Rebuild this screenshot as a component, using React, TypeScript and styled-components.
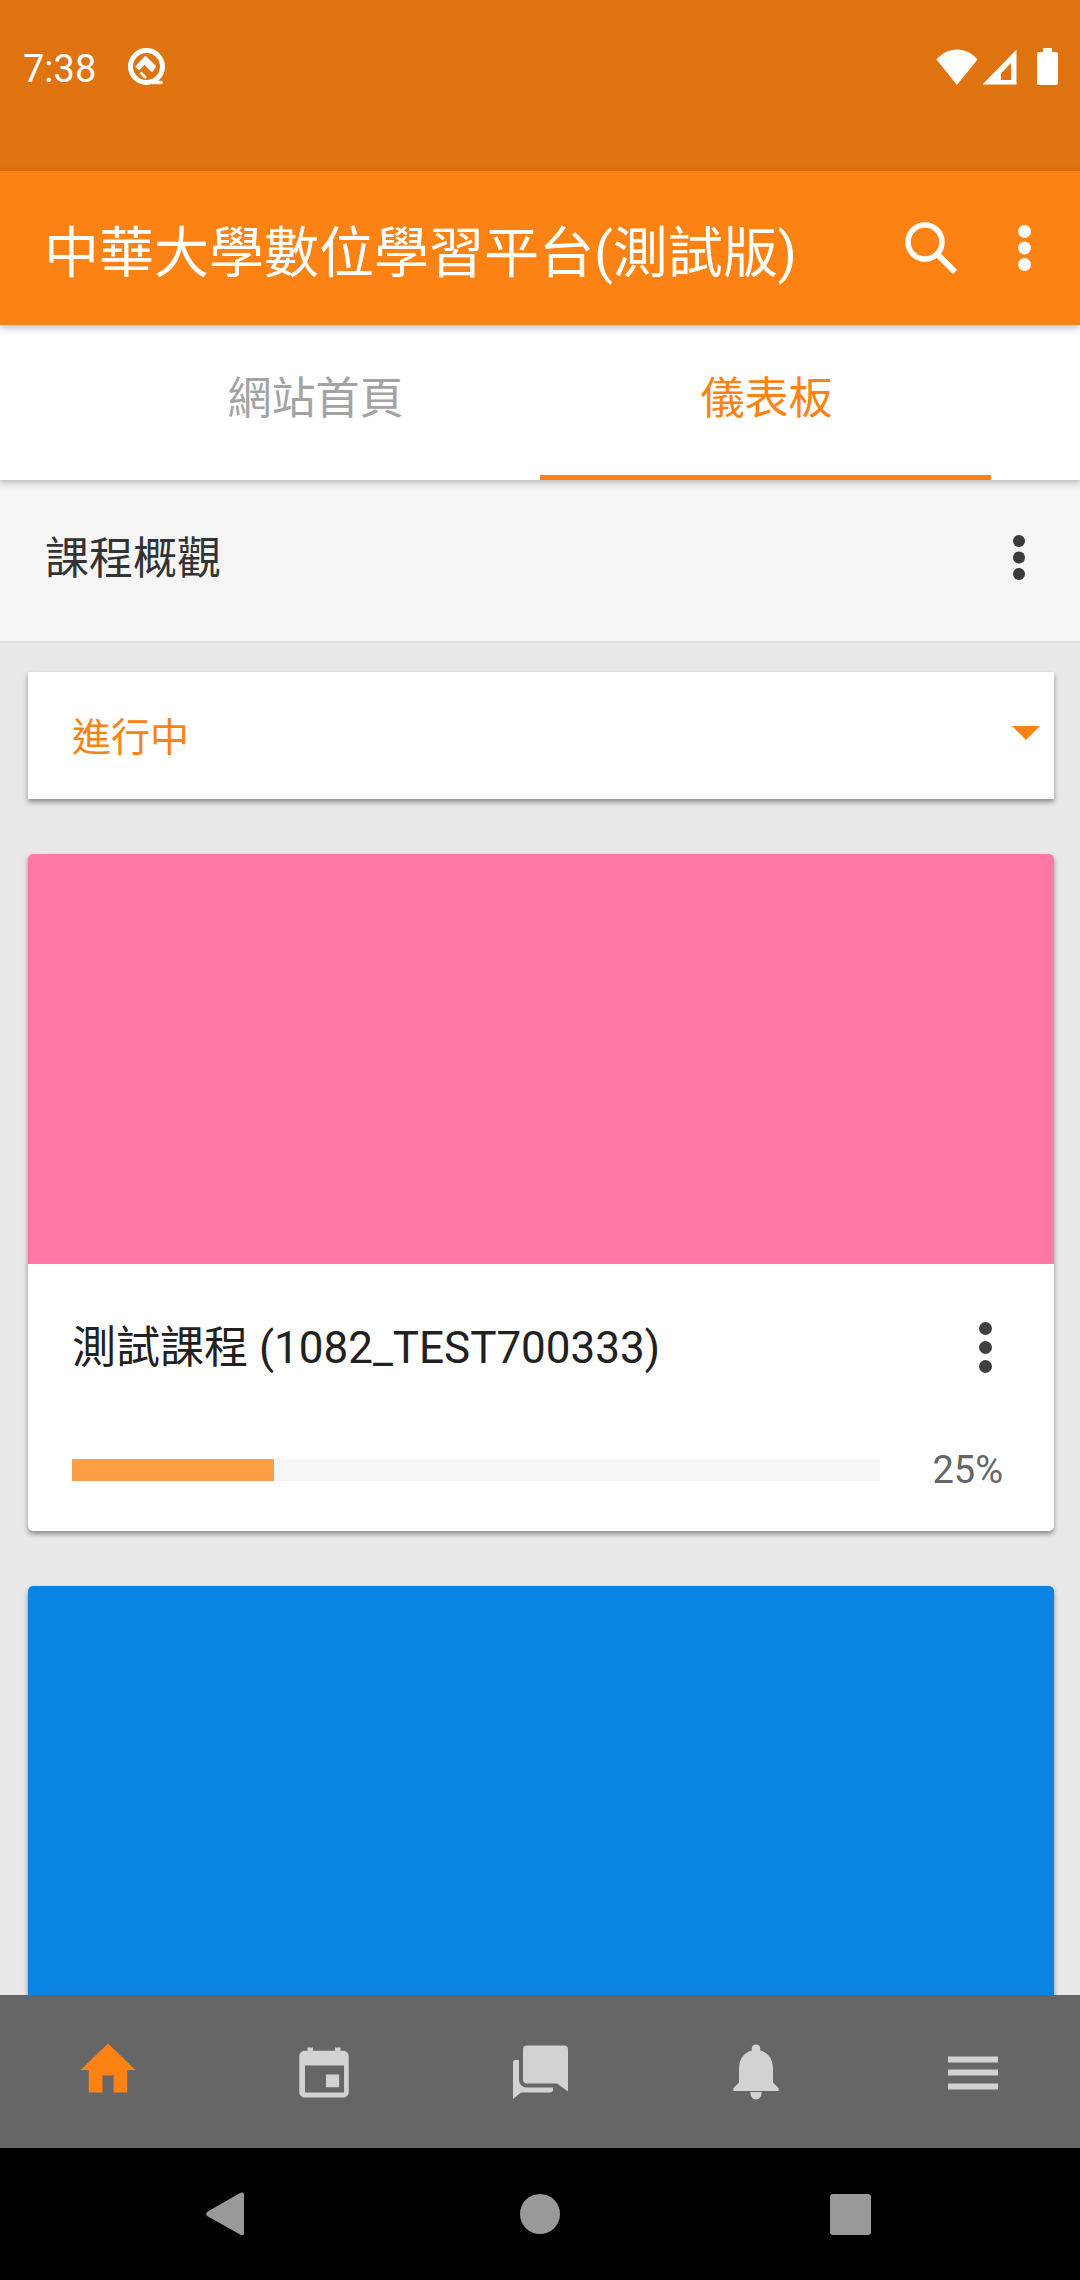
import React from "react";
import styled, { createGlobalStyle } from "styled-components";

const GlobalStyle = createGlobalStyle`
  html, body {
    margin: 0;
    padding: 0;
    background: #000;
  }
  * {
    box-sizing: border-box;
  }
`;

function Dots({ r, gap, color }: { r: number; gap: number; color: string }) {
  const w = r * 2 + 2;
  const h = gap * 2 + r * 2 + 2;
  const cx = w / 2;
  return (
    <svg width={w} height={h} viewBox={`0 0 ${w} ${h}`}>
      {[0, 1, 2].map((i) => (
        <circle key={i} cx={cx} cy={r + 1 + gap * i} r={r} fill={color} />
      ))}
    </svg>
  );
}

function BottomIcon({ name, color }: { name: string; color: string }) {
  if (name === "home") {
    return (
      <svg width="66" height="66" viewBox="0 0 24 24" fill={color}>
        <path d="M10 20.2V14h4v6.200h5V12h3L12 2.400 2 12h3v8.200z" />
      </svg>
    );
  }
  if (name === "calendar") {
    return (
      <svg width="66" height="66" viewBox="0 0 24 24" fill={color}>
        <path d="M17.500 13.600h-4.800v4.700h4.800zM16 3.800V5H8V3.800H6V5H5c-1.110 0-1.990.9-1.990 2L3 20c0 1.100.89 2 2 2h14c1.100 0 2-.9 2-2V7c0-1.100-.9-2-2-2h-1V3.800zM19.300 20.200H5.100V10.400h14.200z" />
      </svg>
    );
  }
  if (name === "chat") {
    return (
      <svg width="66" height="66" viewBox="-1 0 66 66" fill={color}>
        <path d="M19 8.500h37a4 4 0 0 1 4 4v42l-11-8H19a4 4 0 0 1-4-4v-30a4 4 0 0 1 4-4z" />
        <path d="M5 25a2 2 0 0 1 2-2h4v20a7.500 7.500 0 0 0 7.500 7.500H45v2a3 3 0 0 1-3 3H13l-8 6.500z" />
      </svg>
    );
  }
  if (name === "bell") {
    return (
      <svg width="68" height="68" viewBox="0 0 24 24" fill={color}>
        <path d="M12 22.400c1.100 0 2-.9 2-2.600h-4c0 1.700.89 2.600 2 2.600zm6-6v-5c0-3.070-1.640-5.640-4.500-6.320v-.72c0-.83-.67-1.360-1.500-1.360s-1.500.53-1.500 1.360v.72C7.630 5.760 6 8.320 6 11.400v5l-2 2v1h16v-1l-2-2z" />
      </svg>
    );
  }
  return (
    <svg width="66" height="66" viewBox="0 0 66 66" fill={color}>
      <rect x="9" y="19.500" width="50" height="6" />
      <rect x="9" y="32.500" width="50" height="6" />
      <rect x="9" y="46.500" width="50" height="6" />
    </svg>
  );
}

const navItems = ["home", "calendar", "chat", "bell", "menu"];

export default function App() {
  return (
    <>
      <GlobalStyle />
      <Screen>
        <StatusBar>
          <StatusLeft>
            <Time>7:38</Time>
            <svg width="38" height="38" viewBox="0 0 38 38">
              <circle cx="18.500" cy="18.500" r="16" fill="none" stroke="#fff" strokeWidth="5" />
              <path d="M24 34.500h9" stroke="#fff" strokeWidth="3.600" strokeLinecap="round" />
              <path
                d="M17.500 9 27 18.500 24 23 16.500 15.500 11 21 8.500 18.500z"
                fill="#fff"
                stroke="#fff"
                strokeWidth="2"
                strokeLinejoin="round"
              />
              <path d="M12.500 24.500 18 30" stroke="#fff" strokeWidth="2.600" />
            </svg>
          </StatusLeft>
          <StatusRight>
            <svg width="42" height="36" viewBox="0 0 42 36" fill="#fff">
              <path d="M21 36 0.500 10.500C6 4 13 .5 21 .5s15 3.500 20.500 10z" />
            </svg>
            <svg width="35" height="36" viewBox="0 0 35 36" fill="#fff">
              <path fillRule="evenodd" d="M34.500 0.500V35.500H0.500zM29 14 19 24.500V31H29z" />
            </svg>
            <Battery />
          </StatusRight>
        </StatusBar>

        <AppBar>
          <Title>中華大學數位學習平台(測試版)</Title>
          <AppActions>
            <svg width="52" height="52" viewBox="0 0 52 52" fill="none" stroke="#fff">
              <circle cx="20" cy="20" r="17" strokeWidth="5.500" />
              <path d="M31 31 50 50" strokeWidth="6" />
            </svg>
            <Dots r={6.500} gap={16.500} color="#fff" />
          </AppActions>
        </AppBar>

        <Tabs>
          <Tab>網站首頁</Tab>
          <Tab $active>儀表板</Tab>
        </Tabs>

        <SubHeader>
          <SubTitle>課程概觀</SubTitle>
          <Dots r={6} gap={16.500} color="#3a3a3a" />
        </SubHeader>

        <Content>
          <Select>
            <SelectLabel>進行中</SelectLabel>
            <Caret />
          </Select>

          <Card>
            <CardImage $color="#ff78a6" />
            <CardBody>
              <CardTitleRow>
                <CardTitle>測試課程 (1082_TEST700333)</CardTitle>
                <Dots r={6.500} gap={19} color="#3f3f3f" />
              </CardTitleRow>
              <ProgressRow>
                <ProgressTrack>
                  <ProgressFill style={{ width: "25%" }} />
                </ProgressTrack>
                <Percent>25%</Percent>
              </ProgressRow>
            </CardBody>
          </Card>

          <Card>
            <CardImage $color="#0984e3" />
            <CardBody />
          </Card>
        </Content>

        <BottomNav>
          {navItems.map((name, i) => (
            <NavItem key={name}>
              <BottomIcon name={name} color={i === 0 ? "#fc8213" : "#d2d2d2"} />
            </NavItem>
          ))}
        </BottomNav>

        <SystemNav>
          <svg width="42" height="48" viewBox="0 0 42 48" fill="#999">
            <path d="M38 2.500a2 2 0 0 1 2 2v39a2 2 0 0 1-3 1.500L3 26a3 3 0 0 1 0-4L36 3z" />
          </svg>
          <HomeDot />
          <RecentsSquare />
        </SystemNav>
      </Screen>
    </>
  );
}

const Screen = styled.div`
  width: 1080px;
  height: 2280px;
  display: flex;
  flex-direction: column;
  overflow: hidden;
  background: #e8e8e8;
  font-family: Roboto, "Noto Sans CJK TC", sans-serif;
`;

const StatusBar = styled.div`
  height: 171px;
  flex: none;
  background: #df7310;
  display: flex;
  justify-content: space-between;
  align-items: flex-start;
  padding: 48px 22px 0 23px;
  color: #fff;
`;

const StatusLeft = styled.div`
  display: flex;
  align-items: center;
  gap: 32px;
  height: 38px;
`;

const Time = styled.div`
  font-size: 38px;
  line-height: 38px;
  padding-top: 4px;
`;

const StatusRight = styled.div`
  display: flex;
  align-items: flex-start;
  gap: 4px;
  padding-top: 1px;
`;

const Battery = styled.div`
  position: relative;
  width: 21px;
  height: 33px;
  margin: 3px 0 0 16px;
  background: #fff;
  border-radius: 2px;

  &::before {
    content: "";
    position: absolute;
    top: -4px;
    left: 6px;
    width: 9px;
    height: 5px;
    background: #fff;
  }
`;

const AppBar = styled.div`
  height: 154px;
  flex: none;
  background: #fc8213;
  display: flex;
  align-items: center;
  justify-content: space-between;
  padding: 0 48px 0 44px;
  position: relative;
  z-index: 2;
  box-shadow: 0 3px 8px rgba(0, 0, 0, 0.25);
`;

const Title = styled.h1`
  margin: 0;
  color: #fff;
  font-size: 55px;
  font-weight: 400;
  white-space: nowrap;
`;

const AppActions = styled.div`
  display: flex;
  align-items: center;
  gap: 60px;
`;

const Tabs = styled.div`
  height: 155px;
  flex: none;
  background: #fff;
  display: flex;
  justify-content: center;
  position: relative;
  z-index: 1;
  box-shadow: 0 3px 7px rgba(0, 0, 0, 0.25);
`;

const Tab = styled.div<{ $active?: boolean }>`
  width: 451px;
  display: flex;
  align-items: center;
  justify-content: center;
  font-size: 44px;
  padding: 0 0 10px 2px;
  color: ${(p) => (p.$active ? "#fc8213" : "#a3a3a3")};
  border-bottom: 5px solid ${(p) => (p.$active ? "#fc8213" : "transparent")};
`;

const SubHeader = styled.div`
  height: 163px;
  flex: none;
  background: #f5f5f5;
  border-bottom: 2px solid #e0e0e0;
  display: flex;
  align-items: center;
  justify-content: space-between;
  padding: 0 54px 6px 45px;
`;

const SubTitle = styled.div`
  font-size: 44px;
  color: #333;
  margin-bottom: 6px;
`;

const Content = styled.div`
  flex: 1;
  min-height: 0;
  overflow: hidden;
  padding: 29px 26px 0 28px;
  display: flex;
  flex-direction: column;
  gap: 55px;
`;

const Select = styled.div`
  height: 127px;
  flex: none;
  background: #fff;
  box-shadow: 0 3px 5px rgba(0, 0, 0, 0.4);
  display: flex;
  align-items: center;
  justify-content: space-between;
  padding: 0 14px 0 44px;
  position: relative;
`;

const SelectLabel = styled.div`
  font-size: 39px;
  color: #fc8213;
  margin-bottom: 4px;
`;

const Caret = styled.div`
  width: 0;
  height: 0;
  margin-bottom: 6px;
  border-left: 14px solid transparent;
  border-right: 14px solid transparent;
  border-top: 14px solid #fc8213;
`;

const Card = styled.div`
  flex: none;
  background: #fff;
  border-radius: 5px;
  overflow: hidden;
  box-shadow: 0 3px 5px rgba(0, 0, 0, 0.4);
`;

const CardImage = styled.div<{ $color: string }>`
  height: 410px;
  background: ${(p) => p.$color};
`;

const CardBody = styled.div`
  height: 267px;
  padding: 0 51px 0 44px;
  display: flex;
  flex-direction: column;
`;

const CardTitleRow = styled.div`
  display: flex;
  align-items: center;
  justify-content: space-between;
  height: 166px;
  padding: 0 10px 0 0;
`;

const CardTitle = styled.div`
  font-size: 44px;
  color: #212121;
  white-space: nowrap;
  margin-bottom: 6px;
`;

const ProgressRow = styled.div`
  display: flex;
  align-items: center;
  justify-content: space-between;
  margin-top: 24px;
  height: 32px;
`;

const ProgressTrack = styled.div`
  width: 808px;
  height: 22px;
  background: #f5f5f5;
`;

const ProgressFill = styled.div`
  height: 100%;
  background: #fd9d45;
`;

const Percent = styled.div`
  font-size: 38px;
  color: #666;
`;

const BottomNav = styled.div`
  height: 153px;
  flex: none;
  background: #666;
  display: grid;
  grid-template-columns: repeat(5, 1fr);
  position: relative;
`;

const NavItem = styled.div`
  display: flex;
  align-items: center;
  justify-content: center;
  padding-bottom: 4px;
`;

const SystemNav = styled.div`
  height: 132px;
  flex: none;
  background: #000;
  display: flex;
  align-items: center;
  padding-left: 204px;
`;

const HomeDot = styled.div`
  width: 40px;
  height: 40px;
  margin-left: 274px;
  border-radius: 50%;
  background: #999;
`;

const RecentsSquare = styled.div`
  width: 41px;
  height: 41px;
  margin-left: 270px;
  border-radius: 3px;
  background: #999;
`;
